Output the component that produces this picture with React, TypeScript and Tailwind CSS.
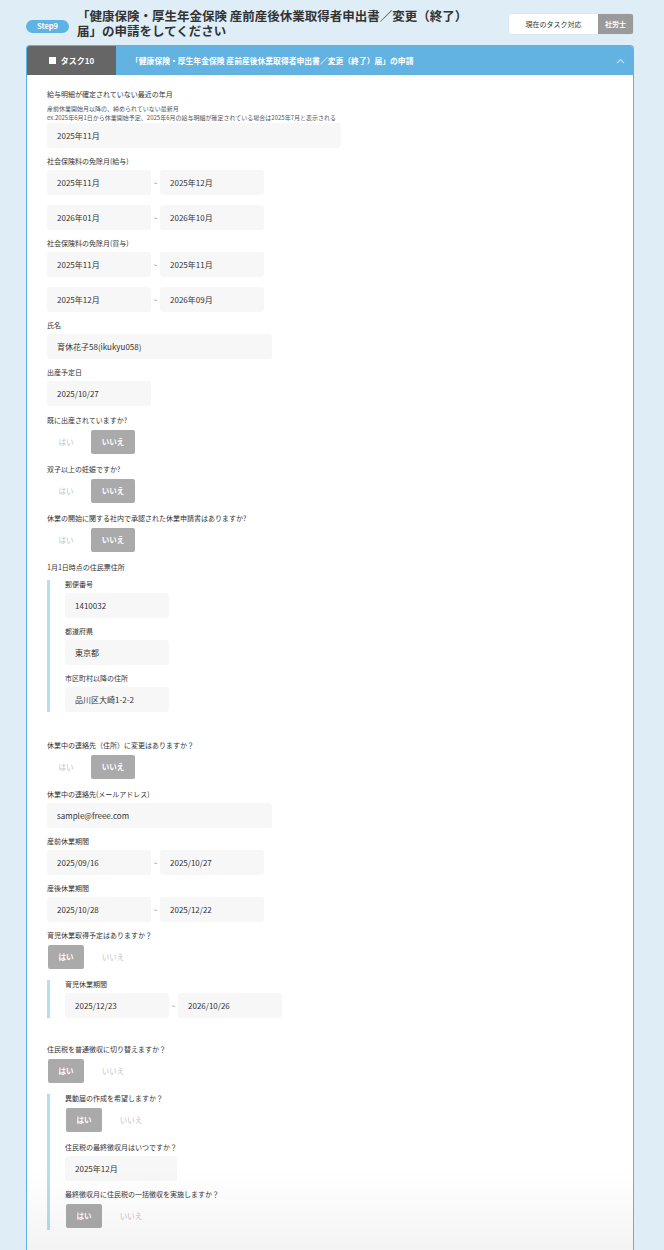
import React from 'react';

type Answer = 'yes' | 'no';

// column wrapper, so label/input margins never collapse into each other
function Field({ children }: { children: React.ReactNode }) {
  return <div className="flex flex-col">{children}</div>;
}

function Label({ children }: { children: React.ReactNode }) {
  return <p className="mb-[4px] text-[7px] leading-[9px] text-[#333]">{children}</p>;
}

function Box({ value, width = 'w-[104px]' }: { value: string; width?: string }) {
  return (
    <div
      className={`flex h-[25px] items-center rounded-[3px] bg-[#f7f7f7] pl-[10px] text-[8px] text-[#333] ${width}`}
    >
      {value}
    </div>
  );
}

function Range({ from, to }: { from: string; to: string }) {
  return (
    <div className="flex items-center">
      <Box value={from} />
      <span className="w-[9px] pt-[2px] text-center text-[7px] text-[#888]">~</span>
      <Box value={to} />
    </div>
  );
}

function YesNo({ answer }: { answer: Answer }) {
  const on = 'rounded-[2px] bg-[#aaaaaa] font-bold text-white';
  const off = 'text-[#c2c2c2]';
  return (
    <div className="mb-[2px] ml-px mt-px flex h-[24px] gap-[7px] text-[7.5px]">
      <span className={`flex w-[36px] items-center justify-center ${answer === 'yes' ? on : off}`}>はい</span>
      <span className={`flex w-[44px] items-center justify-center ${answer === 'no' ? on : off}`}>いいえ</span>
    </div>
  );
}

function Nested({ children, className = '' }: { children: React.ReactNode; className?: string }) {
  return (
    <div className={`flex flex-col gap-[9px] border-l-[3px] border-[#b4def1] pl-[15px] ${className}`}>
      {children}
    </div>
  );
}

export default function App() {
  return (
    <div className="min-h-[1250px] bg-[#dfeef6] font-['Noto_Sans_CJK_JP','Noto_Sans',sans-serif]">
      {/* page header */}
      <header className="flex items-center pl-[26px] pr-[31px] pt-[8px]">
        <span className="mt-[6px] flex h-[13px] w-[43px] shrink-0 items-center justify-center rounded-full bg-[#5db3e4] text-[7.5px] font-bold text-white">
          Step9
        </span>
        <h1 className="ml-[8px] w-[408px] shrink-0 text-[12.5px] font-bold leading-[15px] text-[#333]">
          「健康保険・厚生年金保険 産前産後休業取得者申出書／変更（終了）届」の申請をしてください
        </h1>
        <div className="ml-auto mt-[2px] flex h-[20px] overflow-hidden rounded-[2px] shadow-[0_0_1px_rgba(0,0,0,0.25)]">
          <span className="flex w-[89px] items-center justify-center bg-white text-[7px] text-[#333]">
            現在のタスク対応
          </span>
          <span className="flex w-[35px] items-center justify-center bg-[#9a9a9a] text-[7px] font-bold text-white">
            社労士
          </span>
        </div>
      </header>

      {/* task card */}
      <section className="relative ml-[26px] mt-[7px] w-[608px] overflow-hidden rounded-t-[4px] border-x border-t border-[#5fb1e2] bg-white">
        <div className="flex h-[29px] items-center bg-[#62b3e2]">
          <div className="flex h-full w-[89px] items-center justify-center gap-[5px] bg-[#666] text-[8px] font-bold text-white">
            <span className="h-[7px] w-[7px] bg-white" />
            タスク10
          </div>
          <p className="pl-[15px] text-[7.8px] font-bold text-white">
            「健康保険・厚生年金保険 産前産後休業取得者申出書／変更（終了）届」の申請
          </p>
          <svg className="ml-auto mr-[8px]" width="9" height="6" viewBox="0 0 9 6" fill="none">
            <polyline points="1,5 4.5,1.5 8,5" stroke="rgba(255,255,255,0.55)" strokeWidth="1.2" />
          </svg>
        </div>

        <div className="flex flex-col gap-[9px] px-[20px] pb-[20px] pt-[15px]">
          <Field>
            <p className="text-[7px] leading-[9px] text-[#333]">給与明細が確定されていない最近の年月</p>
            <div className="mb-[1px] mt-[5px] text-[6px] leading-[9px] text-[#555]">
              <p>産前休業開始月以降の、締められていない最新月</p>
              <p>ex.2025年6月1日から休業開始予定、2025年6月の給与明細が確定されている場合は2025年7月と表示される</p>
            </div>
            <Box value="2025年11月" width="w-[294px]" />
          </Field>

          <Field>
            <Label>社会保険料の免除月(給与)</Label>
            <div className="flex flex-col gap-[10px]">
              <Range from="2025年11月" to="2025年12月" />
              <Range from="2026年01月" to="2026年10月" />
            </div>
          </Field>

          <Field>
            <Label>社会保険料の免除月(賞与)</Label>
            <div className="flex flex-col gap-[10px]">
              <Range from="2025年11月" to="2025年11月" />
              <Range from="2025年12月" to="2026年09月" />
            </div>
          </Field>

          <Field>
            <Label>氏名</Label>
            <Box value="育休花子58(ikukyu058)" width="w-[225px]" />
          </Field>

          <Field>
            <Label>出産予定日</Label>
            <Box value="2025/10/27" />
          </Field>

          <div className="mt-[1px]">
            <Field>
              <Label>既に出産されていますか?</Label>
              <YesNo answer="no" />
            </Field>
          </div>

          <Field>
            <Label>双子以上の妊娠ですか?</Label>
            <YesNo answer="no" />
          </Field>

          <Field>
            <Label>休業の開始に関する社内で承認された休業申請書はありますか?</Label>
            <YesNo answer="no" />
          </Field>

          <Field>
            <Label>1月1日時点の住民票住所</Label>
            <Nested className="mb-[20px] mt-[4px]">
              <Field>
                <Label>郵便番号</Label>
                <Box value="1410032" />
              </Field>
              <Field>
                <Label>都道府県</Label>
                <Box value="東京都" />
              </Field>
              <Field>
                <Label>市区町村以降の住所</Label>
                <Box value="品川区大崎1-2-2" />
              </Field>
            </Nested>
          </Field>

          <Field>
            <Label>休業中の連絡先（住所）に変更はありますか？</Label>
            <YesNo answer="no" />
          </Field>

          <Field>
            <Label>休業中の連絡先(メールアドレス)</Label>
            <Box value="sample@freee.com" width="w-[225px]" />
          </Field>

          <Field>
            <Label>産前休業期間</Label>
            <Range from="2025/09/16" to="2025/10/27" />
          </Field>

          <Field>
            <Label>産後休業期間</Label>
            <Range from="2025/10/28" to="2025/12/22" />
          </Field>

          <Field>
            <Label>育児休業取得予定はありますか？</Label>
            <YesNo answer="yes" />
            <Nested className="mb-[18px] mt-[9px]">
              <Field>
                <Label>育児休業期間</Label>
                <Range from="2025/12/23" to="2026/10/26" />
              </Field>
            </Nested>
          </Field>

          <Field>
            <Label>住民税を普通徴収に切り替えますか？</Label>
            <YesNo answer="yes" />
            <Nested className="mt-[9px]">
              <Field>
                <Label>異動届の作成を希望しますか？</Label>
                <YesNo answer="yes" />
              </Field>
              <Field>
                <Label>住民税の最終徴収月はいつですか？</Label>
                <Box value="2025年12月" width="w-[112px]" />
              </Field>
              <Field>
                <Label>最終徴収月に住民税の一括徴収を実施しますか？</Label>
                <YesNo answer="yes" />
              </Field>
            </Nested>
          </Field>
        </div>

        {/* fade at the bottom edge of the card */}
        <div className="pointer-events-none absolute inset-x-0 bottom-0 h-[80px] bg-linear-to-b from-black/0 to-black/[0.045]" />
      </section>
    </div>
  );
}
